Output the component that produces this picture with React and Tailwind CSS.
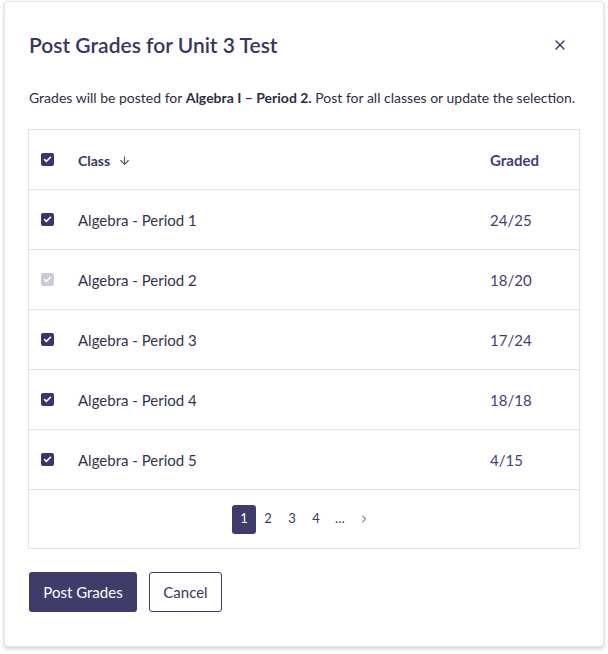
import { X, ArrowDown, ChevronRight, Check } from 'lucide-react'

const ROWS = [
  { name: 'Algebra - Period 1', graded: '24/25', checked: true },
  { name: 'Algebra - Period 2', graded: '18/20', disabled: true },
  { name: 'Algebra - Period 3', graded: '17/24', checked: true },
  { name: 'Algebra - Period 4', graded: '18/18', checked: true },
  { name: 'Algebra - Period 5', graded: '4/15', checked: true },
]

function Box({ disabled }) {
  return (
    <span
      className={`h-[13px] w-[13px] rounded-[2px] flex items-center justify-center ${
        disabled ? 'bg-[#cbc9dd]' : 'bg-[#3d3569]'
      }`}
    >
      <Check size={9} strokeWidth={4} className="text-white" />
    </span>
  )
}

export default function App() {
  return (
    <div className="min-h-screen bg-white pt-px pl-1 pr-1" style={{ fontFamily: 'Lato, "Open Sans", sans-serif' }}>
      <div className="w-[600px] bg-white border border-[#e3e4ea] rounded-[4px] shadow-[0_2px_4px_rgba(0,0,0,0.18)] px-[23px] pt-[29px] pb-[34px]">
        {/* Header */}
        <div className="flex items-center justify-between h-7">
          <h2 className="text-[21px] font-semibold text-[#3a3661] pl-px">Post Grades for Unit 3 Test</h2>
          <button className="mr-[12px] text-[#3a3661]">
            <X size={16} strokeWidth={2} />
          </button>
        </div>

        <p className="mt-[29px] pl-px text-[14px] leading-5 text-[#2f2d3f]">
          Grades will be posted for <span className="font-bold">Algebra I – Period 2.</span> Post for all classes or update the selection.
        </p>

        {/* Table */}
        <div className="mt-[21px] border border-[#e3e4ea]">
          <div className="grid grid-cols-[49px_1fr_89px] items-center h-[60px] border-b border-[#e3e4ea] text-[14px] font-bold text-[#3a3661]">
            <div className="pl-3"><Box /></div>
            <div className="flex items-center gap-2 pt-px">
              Class <ArrowDown size={13} strokeWidth={2} className="text-[#55526e]" />
            </div>
            <div className="text-[15px] text-[#453c78] pt-px">Graded</div>
          </div>
          {ROWS.map(r => (
            <div
              key={r.name}
              className="grid grid-cols-[49px_1fr_89px] items-center h-[60px] border-b border-[#e3e4ea] text-[15px]"
            >
              <div className="pl-3"><Box disabled={r.disabled} /></div>
              <div className="text-[#34314f] pt-px">{r.name}</div>
              <div className="text-[#463d7a] pt-px">{r.graded}</div>
            </div>
          ))}
          <div className="flex items-center justify-center h-[58px] text-[13px] text-[#3a3661]">
            <span className="w-6 h-[29px] flex items-center justify-center rounded-[3px] bg-[#3f3b6b] text-white">1</span>
            <span className="w-6 text-center">2</span>
            <span className="w-6 text-center">3</span>
            <span className="w-6 text-center">4</span>
            <span className="w-6 text-center">…</span>
            <span className="w-6 flex justify-center"><ChevronRight size={12} strokeWidth={2} /></span>
          </div>
        </div>

        {/* Actions */}
        <div className="mt-[23px] flex gap-3 pl-px">
          <button className="h-10 w-[108px] rounded-[3px] bg-[#3f3b6b] text-white text-[15px]">Post Grades</button>
          <button className="h-10 w-[73px] rounded-[3px] border border-[#3f3b6b] text-[#3a3661] text-[15px]">Cancel</button>
        </div>
      </div>
    </div>
  )
}
